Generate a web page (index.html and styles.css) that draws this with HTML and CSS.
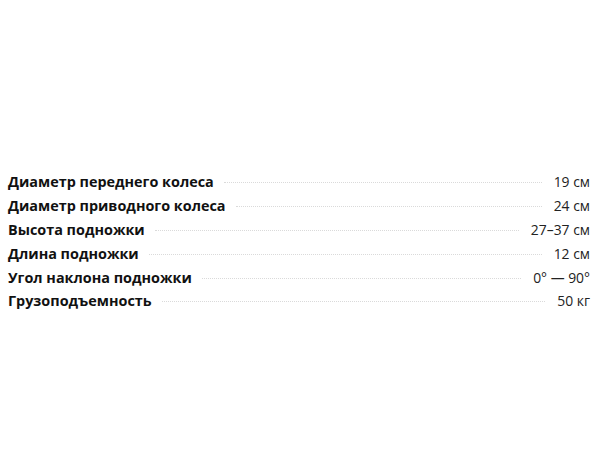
FILE: index.html
```html
<!DOCTYPE html>
<html lang="ru">
<head>
<meta charset="utf-8">
<link rel="stylesheet" href="styles.css">
</head>
<body>
<dl class="specs">
  <div class="row"><dt class="label">Диаметр переднего колеса</dt><span class="dots"></span><dd class="value">19 см</dd></div>
  <div class="row"><dt class="label">Диаметр приводного колеса</dt><span class="dots"></span><dd class="value">24 см</dd></div>
  <div class="row"><dt class="label">Высота подножки</dt><span class="dots"></span><dd class="value">27–37 см</dd></div>
  <div class="row"><dt class="label">Длина подножки</dt><span class="dots"></span><dd class="value">12 см</dd></div>
  <div class="row"><dt class="label">Угол наклона подножки</dt><span class="dots"></span><dd class="value">0° — 90°</dd></div>
  <div class="row"><dt class="label">Грузоподъемность</dt><span class="dots"></span><dd class="value">50 кг</dd></div>
</dl>
</body>
</html>
```
FILE: styles.css
```css
html, body {
  margin: 0;
  background: #fff;
}
body {
  font-family: "Open Sans", "Noto Sans", sans-serif;
  font-size: 14px;
  color: #1a1a1a;
}
.specs {
  margin: 0;
  padding: 170px 10px 0 8px;
}
.row {
  display: flex;
  align-items: center;
  height: 23.8px;
}
.label {
  margin: 0;
  font-size: 14.4px;
  font-weight: 700;
  color: #111;
  white-space: nowrap;
}
.dots {
  flex: 1;
  margin: 2px 12px 0 10px;
  border-top: 1px dotted #dadada;
}
.value {
  margin: 0;
  font-size: 13.9px;
  color: #222;
  white-space: nowrap;
}
```
